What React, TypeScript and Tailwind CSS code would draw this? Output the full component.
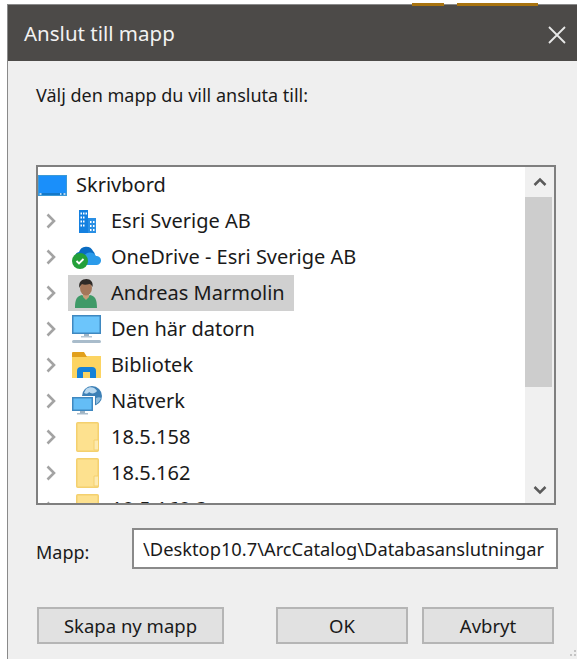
const font = 'font-["Noto_Sans",sans-serif]'

function Chevron() {
  return (
    <svg width="11" height="16" viewBox="0 0 11 16" className="shrink-0">
      <path d="M1.500 1.500 8 8l-6.500 6.500" fill="none" stroke="#a3a3a3" strokeWidth="2.600" />
    </svg>
  )
}

function DesktopIcon() {
  return (
    <svg width="29" height="21" viewBox="0 0 29 21">
      <rect x="0" y="0" width="29" height="21" fill="#3c9ad6" />
      <rect x="1" y="1" width="27" height="17" fill="#1a8ffa" />
      <rect x="1" y="18" width="27" height="2" fill="#1478c8" />
      <path d="M1.500 19h2M22 19h1.500M25.500 19h2" stroke="#eaf5ff" strokeWidth="1.500" />
    </svg>
  )
}

function BuildingIcon() {
  return (
    <svg width="17" height="23" viewBox="0 0 17 23">
      <path d="M0 0h9v23H0z" fill="#1480e0" />
      <path d="M9 8h8v15H9z" fill="#2a8fe4" />
      <path d="M1.500 2.500H3v2H1.500zM4 2.500h1.500v2H4zM6.500 2.500H8v2H6.500zM1.500 6.500H3v2H1.500zM4 6.500h1.500v2H4zM1.500 10.500H3v2H1.500zM4 10.500h1.500v2H4zM1.500 14.500H3v2H1.500zM4 14.500h1.500v2H4zM11 11h1.500v2H11zM14 11h1.500v2H14zM11 15h1.500v2H11zM14 15h1.500v2H14zM11 19h1.500v2H11zM14 19h1.500v2H14z" fill="#fff" />
    </svg>
  )
}

function OneDriveIcon() {
  return (
    <svg width="29" height="23" viewBox="0 0 29 23">
      <path d="M5 15a5 5 0 0 1 2-9 7.500 7.500 0 0 1 14-1 6 6 0 0 1 2 5v7H7z" fill="#0a6cc2" />
      <path d="M12 19a4 4 0 0 1 0-8 6.500 6.500 0 0 1 12-1 4.500 4.500 0 0 1 1 9z" fill="#2b9bea" />
      <circle cx="8" cy="15" r="8" fill="#24a03a" />
      <path d="m4.500 15 2.500 2.500 4.500-4.500" fill="none" stroke="#fff" strokeWidth="1.800" />
    </svg>
  )
}

function UserIcon() {
  return (
    <svg width="22" height="29" viewBox="0 0 22 29">
      <path d="M0 29c0-9 2-12 7-13l4 3 4-3c5 1 7 4 7 13z" fill="#3f9a68" />
      <path d="M8 15h6v3l-3 3-3-3z" fill="#c79d7a" />
      <ellipse cx="11" cy="9" rx="6" ry="7.500" fill="#a4775a" />
      <path d="M4.500 9C3 3 7 0 11.500 0c4 0 7 3 6 8-1-2-2-3-3-3-3 1-6 1-7.500 0-1 1-2 2-2.500 4z" fill="#2e2a27" />
    </svg>
  )
}

function MonitorIcon() {
  return (
    <svg width="29" height="28" viewBox="0 0 29 28">
      <rect x="0" y="0" width="29" height="19" fill="#3f88c0" />
      <rect x="1.500" y="1.500" width="26" height="16" fill="#6cc5fb" />
      <rect x="12" y="19" width="5" height="2" fill="#9fb4c4" />
      <rect x="9" y="21" width="11" height="1.500" fill="#b5c6d3" />
      <rect x="0" y="25" width="29" height="3" rx="1.500" fill="#a9bccb" />
    </svg>
  )
}

function LibraryIcon() {
  return (
    <svg width="29" height="26" viewBox="0 0 29 26">
      <path d="M0 4h29v22H0z" fill="#fcd462" />
      <path d="M0 1q0-1 1-1h11l3 5H0z" fill="#e2a01c" />
      <path d="M5 26V19q0-4 4-4h11q4 0 4 4v7h-6v-6h-7v6z" fill="#1581d8" />
    </svg>
  )
}

function NetworkIcon() {
  return (
    <svg width="30" height="30" viewBox="0 0 30 30">
      <circle cx="20" cy="10" r="10" fill="#3d80b6" />
      <path d="M14 3c4-3 9-2 11 2-2 3-6 3-8 1-1 2-3 2-5 1z" fill="#b9d8ef" />
      <path d="M24 12c2-1 4-1 5 0-1 3-3 5-5 6z" fill="#8fbcdc" />
      <rect x="-1" y="10" width="24" height="16" fill="#fff" />
      <rect x="0" y="11" width="21" height="14" fill="#3f88c0" />
      <rect x="1.500" y="12.500" width="18" height="11" fill="#64bdf6" />
      <rect x="8" y="25" width="5" height="2" fill="#9fb4c4" />
      <rect x="5" y="27" width="11" height="1.500" fill="#a9bccb" />
    </svg>
  )
}

function FolderIcon() {
  return (
    <svg width="23" height="30" viewBox="0 0 23 30">
      <rect x="0.750" y="0.750" width="21.500" height="28.500" rx="1" fill="#fde18f" stroke="#f4d06e" strokeWidth="1.500" />
      <path d="M18 28V18h4.500v10z" fill="#fdeab0" stroke="#f4d06e" />
    </svg>
  )
}

const folders = [
  { label: 'Esri Sverige AB', icon: <BuildingIcon />, iconPad: 'pl-[11px]' },
  { label: 'OneDrive - Esri Sverige AB', icon: <OneDriveIcon />, iconPad: 'pl-[4px]' },
  { label: 'Andreas Marmolin', icon: <UserIcon />, iconPad: 'pl-[7px]', selected: true },
  { label: 'Den här datorn', icon: <MonitorIcon />, iconPad: 'pl-[4px]' },
  { label: 'Bibliotek', icon: <LibraryIcon />, iconPad: 'pl-[4px]' },
  { label: 'Nätverk', icon: <NetworkIcon />, iconPad: 'pl-[4px]' },
  { label: '18.5.158', icon: <FolderIcon />, iconPad: 'pl-[8px]' },
  { label: '18.5.162', icon: <FolderIcon />, iconPad: 'pl-[8px]' },
  { label: '18.5.168.3', icon: <FolderIcon />, iconPad: 'pl-[8px]' },
]

export default function App() {
  return (
    <div className={`relative h-[659px] w-[577px] overflow-hidden bg-white pl-[7px] pt-[4px] text-[#1a1a1a] ${font}`}>
      <div className="absolute left-[412px] top-[3px] h-[3px] w-[32px] bg-[#a8730f]" />
      <div className="absolute left-[457px] top-[3px] h-[3px] w-[81px] bg-[#a8730f]" />

      <div className="flex h-full flex-col border-l border-t border-[#8a8a8a] bg-[#efefef]">
        <header className="flex h-[56px] shrink-0 items-center justify-between bg-[#4c4a48] pl-[16px] pr-[11px] text-[20.5px] text-[#f2f2f2]">
          <span className="pt-[1px]">Anslut till mapp</span>
          <svg width="18" height="18" viewBox="0 0 18 18" className="mt-[3px]">
            <path d="m1 1 16 16M17 1 1 17" stroke="#e8e8e8" strokeWidth="1.800" />
          </svg>
        </header>

        <div className="flex-1 pl-[28px] pr-[19px]">
          <p className="mt-[21px] text-[18px] leading-[26px]">Välj den mapp du vill ansluta till:</p>

          <div className="mt-[57px] flex h-[340px] w-[520px] overflow-hidden border-2 border-[#7f7f7f] bg-white">
            <div className="min-w-0 flex-1 overflow-hidden">
              <div className="flex h-9 items-center">
                <span className="w-[38px] shrink-0">
                  <DesktopIcon />
                </span>
                <span className="text-[20px]">Skrivbord</span>
              </div>
              {folders.map((f) => (
                <div key={f.label} className="flex h-9 items-center">
                  <span className="flex w-[30px] shrink-0 justify-center pr-[3px]">
                    <Chevron />
                  </span>
                  <div className={`flex h-9 items-center pr-[9px] ${f.selected ? 'bg-[#d0d0d0]' : ''}`}>
                    <span className={`flex w-[43px] shrink-0 items-center ${f.iconPad}`}>{f.icon}</span>
                    <span className="whitespace-nowrap text-[20px]">{f.label}</span>
                  </div>
                </div>
              ))}
            </div>

            <div className="flex w-[29px] shrink-0 flex-col bg-[#f0f0f0]">
              <div className="flex h-[30px] shrink-0 items-center justify-center">
                <svg width="14" height="10" viewBox="0 0 14 10">
                  <path d="m1.500 8 5.500-5.500L12.500 8" fill="none" stroke="#5a5a5a" strokeWidth="2.500" />
                </svg>
              </div>
              <div className="mr-[2px] h-[190px] shrink-0 bg-[#cdcdcd]" />
              <div className="flex flex-1 items-end justify-center pb-[8px]">
                <svg width="14" height="10" viewBox="0 0 14 10">
                  <path d="m1.500 2 5.500 5.500L12.500 2" fill="none" stroke="#5a5a5a" strokeWidth="2.500" />
                </svg>
              </div>
            </div>
          </div>

          <div className="mt-[23px] flex h-[41px] items-center">
            <label className="w-[96px] shrink-0 pt-[7px] text-[18px]">Mapp:</label>
            <input
              readOnly
              value="\Desktop10.7\ArcCatalog\Databasanslutningar"
              className="h-[41px] w-[426px] shrink-0 border-2 border-[#8a8a8a] bg-white pl-[9px] text-[18.300px] outline-none"
            />
          </div>

          <div className="ml-[1px] mt-[38px] flex h-[37px] w-[518px] items-stretch">
            <button className="w-[187px] border-2 border-[#b5b5b5] bg-[#e1e1e1] text-[18.500px]">Skapa ny mapp</button>
            <button className="ml-[52px] w-[132px] border-2 border-[#b5b5b5] bg-[#e1e1e1] text-[18.500px]">OK</button>
            <button className="ml-[14px] w-[132px] border-2 border-[#b5b5b5] bg-[#e1e1e1] text-[18.500px]">Avbryt</button>
          </div>
        </div>
      </div>

      <svg width="10" height="10" viewBox="0 0 10 10" className="absolute bottom-0 right-0">
        <path d="M7 1h2v2H7zM3 5h2v2H3zM7 5h2v2H7z" fill="#c4c4c4" />
      </svg>
    </div>
  )
}
